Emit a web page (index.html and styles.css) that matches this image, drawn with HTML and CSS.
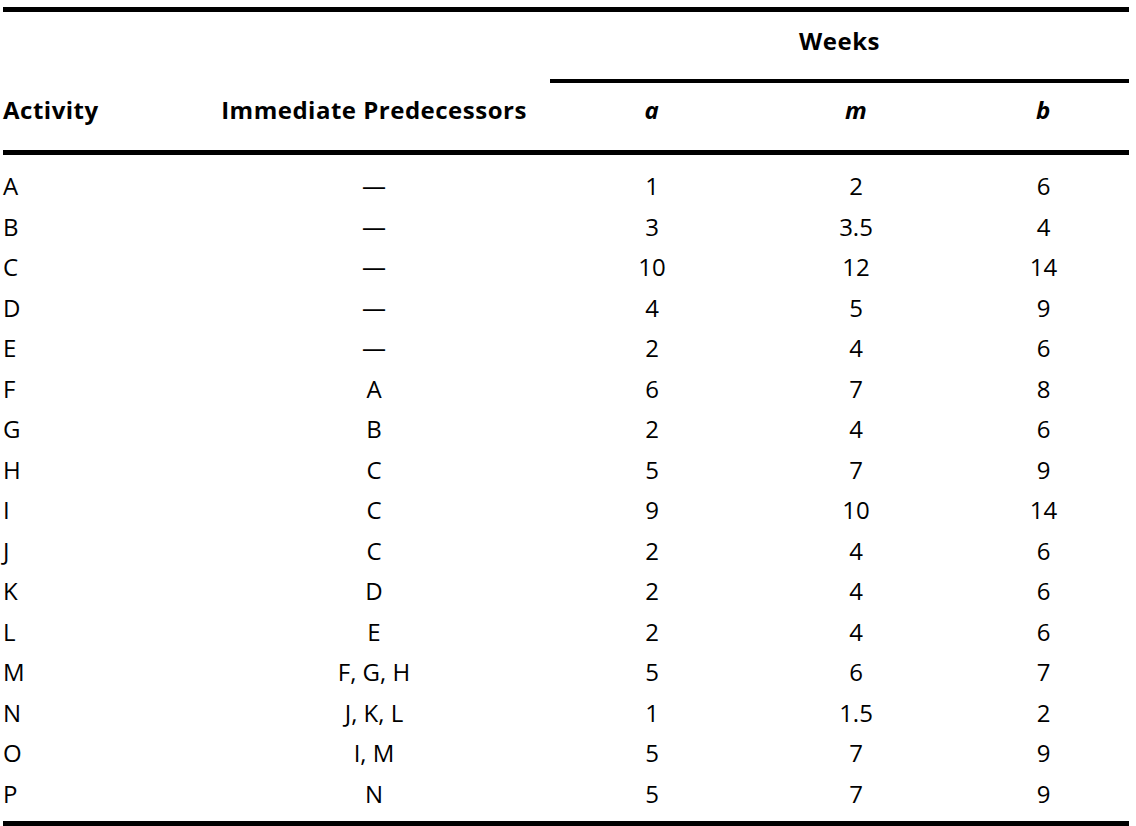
FILE: index.html
```html
<!DOCTYPE html>
<html>
<head>
<meta charset="utf-8">
<link rel="stylesheet" href="styles.css">
</head>
<body>
<div class="table">
  <div class="h h-activity">Activity</div>
  <div class="h h-pred">Immediate Predecessors</div>
  <div class="h h-weeks">Weeks</div>
  <div class="h h-var">a</div>
  <div class="h h-var">m</div>
  <div class="h h-var">b</div>
  <div class="rule"></div>
  <div class="body">
    <div class="c first">A</div><div class="c">—</div><div class="c">1</div><div class="c">2</div><div class="c">6</div>
    <div class="c first">B</div><div class="c">—</div><div class="c">3</div><div class="c">3.5</div><div class="c">4</div>
    <div class="c first">C</div><div class="c">—</div><div class="c">10</div><div class="c">12</div><div class="c">14</div>
    <div class="c first">D</div><div class="c">—</div><div class="c">4</div><div class="c">5</div><div class="c">9</div>
    <div class="c first">E</div><div class="c">—</div><div class="c">2</div><div class="c">4</div><div class="c">6</div>
    <div class="c first">F</div><div class="c">A</div><div class="c">6</div><div class="c">7</div><div class="c">8</div>
    <div class="c first">G</div><div class="c">B</div><div class="c">2</div><div class="c">4</div><div class="c">6</div>
    <div class="c first">H</div><div class="c">C</div><div class="c">5</div><div class="c">7</div><div class="c">9</div>
    <div class="c first">I</div><div class="c">C</div><div class="c">9</div><div class="c">10</div><div class="c">14</div>
    <div class="c first">J</div><div class="c">C</div><div class="c">2</div><div class="c">4</div><div class="c">6</div>
    <div class="c first">K</div><div class="c">D</div><div class="c">2</div><div class="c">4</div><div class="c">6</div>
    <div class="c first">L</div><div class="c">E</div><div class="c">2</div><div class="c">4</div><div class="c">6</div>
    <div class="c first">M</div><div class="c">F, G, H</div><div class="c">5</div><div class="c">6</div><div class="c">7</div>
    <div class="c first">N</div><div class="c">J, K, L</div><div class="c">1</div><div class="c">1.5</div><div class="c">2</div>
    <div class="c first">O</div><div class="c">I, M</div><div class="c">5</div><div class="c">7</div><div class="c">9</div>
    <div class="c first">P</div><div class="c">N</div><div class="c">5</div><div class="c">7</div><div class="c">9</div>
  </div>
</div>
</body>
</html>
```

FILE: styles.css
```css
html, body {
  margin: 0;
  padding: 0;
  background: #fff;
}
body {
  font-family: "Open Sans", "Noto Sans", sans-serif;
  color: #000;
  font-size: 24px;
}
.table {
  margin: 7px 0 0 3px;
  width: 1126px;
  display: grid;
  grid-template-columns: 195px 352px 204px 204px 171px;
  grid-template-rows: 71px 67px 5px auto;
  border-top: 5px solid #000;
  border-bottom: 5px solid #000;
}
.h {
  font-weight: 700;
  text-align: center;
  letter-spacing: 0.5px;
}
.h-activity {
  grid-column: 1;
  grid-row: 1 / 3;
  align-self: end;
  text-align: left;
  line-height: 54px;
  padding-bottom: 13px;
}
.h-pred {
  grid-column: 2;
  grid-row: 1 / 3;
  align-self: end;
  line-height: 54px;
  padding-bottom: 13px;
}
.h-weeks {
  grid-column: 3 / 6;
  grid-row: 1;
  line-height: 57px;
  height: 67px;
  border-bottom: 4px solid #000;
}
.h-var {
  grid-row: 2;
  font-style: italic;
  line-height: 54px;
}
.rule {
  grid-column: 1 / 6;
  grid-row: 3;
  background: #000;
}
.body {
  grid-column: 1 / 6;
  grid-row: 4;
  display: grid;
  grid-template-columns: 195px 352px 204px 204px 171px;
  grid-auto-rows: 40.5px;
  padding: 11px 0 7px;
}
.c {
  text-align: center;
  line-height: 40.5px;
}
.c.first {
  text-align: left;
}
```
